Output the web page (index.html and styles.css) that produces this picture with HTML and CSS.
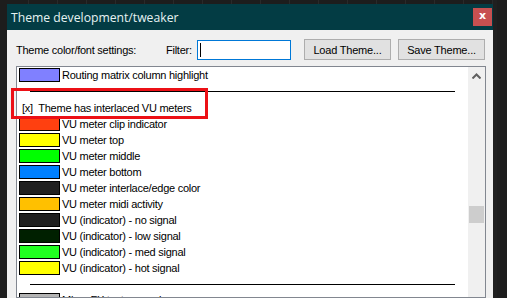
FILE: index.html
```html
<!DOCTYPE html>
<html>
<head>
<meta charset="utf-8">
<link rel="stylesheet" href="styles.css">
</head>
<body>
<div class="screen">
  <div class="window">
    <div class="titlebar">
      <span class="title">Theme development/tweaker</span>
      <span class="close">x</span>
    </div>
    <div class="content">
      <div class="toolbar">
        <span class="lbl-main">Theme color/font settings:</span>
        <span class="lbl-filter">Filter:</span>
        <div class="input"><span class="caret"></span></div>
        <button class="btn">Load Theme...</button>
        <button class="btn">Save Theme...</button>
      </div>
      <div class="list">
        <div class="rows">
          <div class="row"><span class="sw c-route"></span>Routing matrix column highlight</div>
          <div class="sep first"><span class="line"></span></div>
          <div class="row head">[x]&nbsp; Theme has interlaced VU meters</div>
          <div class="row"><span class="sw c-clip"></span>VU meter clip indicator</div>
          <div class="row"><span class="sw c-yel"></span>VU meter top</div>
          <div class="row"><span class="sw c-grn"></span>VU meter middle</div>
          <div class="row"><span class="sw c-blu"></span>VU meter bottom</div>
          <div class="row"><span class="sw c-dark"></span>VU meter interlace/edge color</div>
          <div class="row"><span class="sw c-midi"></span>VU meter midi activity</div>
          <div class="row"><span class="sw c-dark"></span>VU (indicator) - no signal</div>
          <div class="row"><span class="sw c-low"></span>VU (indicator) - low signal</div>
          <div class="row"><span class="sw c-med"></span>VU (indicator) - med signal</div>
          <div class="row"><span class="sw c-yel"></span>VU (indicator) - hot signal</div>
          <div class="sep"><span class="line"></span></div>
          <div class="row"><span class="sw c-grey"></span>Mixer FX text: normal</div>
        </div>
        <div class="scrollbar">
          <div class="sb-up">
            <svg width="9" height="6" viewBox="0 0 9 6"><path d="M0.5 5.5 L4.5 1.5 L8.5 5.5" fill="none" stroke="#606060" stroke-width="2"/></svg>
          </div>
          <div class="sb-track"><div class="thumb"></div></div>
        </div>
      </div>
    </div>
  </div>
  <div class="rightband"></div>
  <div class="annot"></div>
</div>
</body>
</html>
```
FILE: styles.css
```css
html, body {
  margin: 0;
  padding: 0;
}
body {
  width: 507px;
  height: 298px;
  overflow: hidden;
  background: #1d1d1d;
  font-family: "Liberation Sans", Arial, sans-serif;
  font-size: 11px;
  letter-spacing: -0.25px;
  color: #000;
}
.screen {
  position: relative;
  display: flex;
  height: 298px;
  padding-top: 4px;
  padding-left: 7px;
  box-sizing: border-box;
  background-image: repeating-linear-gradient(90deg, transparent 0 28px, #2a2a2a 28px 29px);
  background-size: 100% 4px;
  background-repeat: no-repeat;
}
.window {
  width: 486px;
  height: 294px;
  background: #f0f0f0;
  display: flex;
  flex-direction: column;
  flex: none;
}
.titlebar {
  height: 26px;
  background: #033c44;
  display: flex;
  align-items: center;
  justify-content: space-between;
  padding: 0 1px 0 4px;
  flex: none;
}
.title {
  font-family: "Open Sans", "Noto Sans", sans-serif;
  font-size: 12.2px;
  color: #e6f2f2;
  letter-spacing: 0;
}
.close {
  width: 19px;
  height: 18px;
  background: #c75050;
  color: #fff;
  font-family: "DejaVu Sans", sans-serif;
  font-weight: bold;
  font-size: 11px;
  line-height: 16px;
  text-align: center;
  letter-spacing: 0;
}
.content {
  flex: 1;
  display: flex;
  flex-direction: column;
  padding: 9px 7px 0 9px;
  min-height: 0;
}
.toolbar {
  display: flex;
  align-items: center;
  height: 21px;
  flex: none;
}
.lbl-main {
  width: 150px;
}
.lbl-filter {
  width: 31px;
}
.input {
  width: 94px;
  height: 20px;
  box-sizing: border-box;
  border: 1px solid #0078d7;
  background: #fff;
  margin-right: 13px;
  margin-top: 1px;
  display: flex;
  align-items: center;
}
.caret {
  width: 1px;
  height: 14px;
  background: #000;
  margin-left: 2px;
}
.btn {
  width: 87px;
  height: 21px;
  box-sizing: border-box;
  border: 1px solid #adadad;
  background: #e1e1e1;
  font-family: "Liberation Sans", Arial, sans-serif;
  font-size: 11px;
  letter-spacing: -0.2px;
  color: #000;
  padding: 0;
  margin: 0 7px 0 0;
}
.btn:last-child {
  margin-right: 0;
}
.list {
  margin-top: 6px;
  flex: 1;
  border: 1px solid #828790;
  background: #fff;
  display: flex;
  min-height: 0;
  overflow: hidden;
}
.rows {
  flex: 1;
  display: flex;
  flex-direction: column;
}
.row {
  height: 16px;
  display: flex;
  align-items: center;
  padding-left: 2px;
  white-space: nowrap;
  flex: none;
}
.row.head {
  padding-left: 5px;
}
.sw {
  width: 41px;
  height: 14px;
  box-sizing: border-box;
  border: 1px solid #000;
  margin-right: 2px;
  flex: none;
}
.c-route { background: #8080ff; }
.c-clip { background: #ff4010; }
.c-yel { background: #ffff00; }
.c-grn { background: #00ff00; }
.c-blu { background: #0080ff; }
.c-dark { background: #202020; }
.c-midi { background: #ffc000; }
.c-low { background: #002000; }
.c-med { background: #20ff20; }
.c-grey { background: #b4b4b4; }
.sep {
  height: 16px;
  flex: none;
  padding-top: 8px;
  padding-left: 13px;
  box-sizing: border-box;
}
.sep.first {
  height: 17px;
  padding-top: 8px;
}
.line {
  display: block;
  width: 425px;
  height: 1px;
  background: #000;
}
.scrollbar {
  width: 17px;
  background: #f0f0f0;
  display: flex;
  flex-direction: column;
  flex: none;
}
.sb-up {
  height: 17px;
  display: flex;
  align-items: center;
  justify-content: center;
}
.sb-track {
  padding-top: 122px;
  padding-left: 1px;
}
.thumb {
  width: 15px;
  height: 17px;
  background: #cdcdcd;
}
.rightband {
  width: 4px;
  height: 298px;
  margin-top: -4px;
  background: #202020;
  flex: none;
}
.annot {
  position: absolute;
  left: 11px;
  top: 88px;
  width: 197px;
  height: 31px;
  box-sizing: border-box;
  border: 3px solid #ec1016;
}
```
